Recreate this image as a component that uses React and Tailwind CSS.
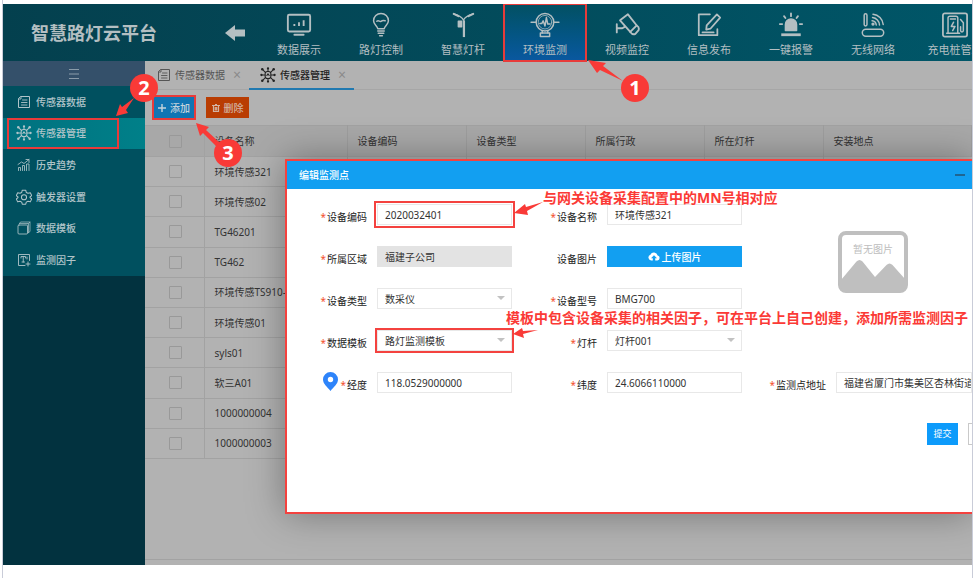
import React from "react";

const line = { fill: "none", stroke: "currentColor", strokeWidth: 1.6, strokeLinecap: "round", strokeLinejoin: "round" };

function Svg({ size, children }) {
  return (
    <svg className={size} viewBox="0 0 28 28" aria-hidden="true" {...line}>
      {children}
    </svg>
  );
}

const MonitorIcon = () => (
  <Svg size="h-[26px] w-[26px]">
    <rect x="2" y="3" width="24" height="18" rx="1.5" strokeWidth="2" />
    <path d="M9 15v-2M14 15v-4M19 15V9" strokeWidth="2" strokeLinecap="butt" />
    <path d="M9 24.5h10" strokeWidth="2" />
  </Svg>
);
const BulbIcon = () => (
  <Svg size="h-[26px] w-[26px]">
    <path d="M10.5 18C10 15 6 13.500 6 9.500a8 8 0 0 1 16 0c0 4-4 5.500-4.500 8.500z" />
    <path d="M9.500 10c2-2 3 1 4.500 0s2.500-1 4.500-.5M10.500 20.500h7M11 23h6M12.500 25.500h3" />
  </Svg>
);
const PoleIcon = () => (
  <Svg size="h-[26px] w-[26px]">
    <path d="M14.500 9C13.500 6 11 4 4 2M14.500 9C15.500 6 18 4 25 2" strokeWidth="1.400" />
    <path d="M4 2l5 2.500M25 2l-5 2.500" strokeWidth="2.200" />
    <rect x="9" y="10" width="3.500" height="6" fill="currentColor" />
    <path d="M15 9v18" strokeWidth="2.400" strokeLinecap="butt" />
  </Svg>
);
const SensorIcon = () => (
  <Svg size="h-[26px] w-[26px] overflow-visible">
    <circle cx="14" cy="11" r="9.500" />
    <circle cx="14" cy="11" r="7.300" strokeWidth=".8" />
    <path d="M-1 11h5M24 11h5M8.500 12.500h2l1.500-3 2 5.500 1.500-9 1.500 7h2.500" />
    <path d="M11 20v3M17 20v3M9 22.500h10v4H9z" />
  </Svg>
);
const CameraIcon = () => (
  <Svg size="h-[26px] w-[26px]">
    <path d="M6.500 9L15 2.500l9.500 12-7 7z" strokeWidth="2" />
    <path d="M24.500 14.500q3 1.500 2 5l-3.500 4q-3 1.500-5.500-2M3 13v9M3 17.500h6l2.500-1.500" strokeWidth="2" />
  </Svg>
);
const EditIcon = () => (
  <Svg size="h-[26px] w-[26px]">
    <path d="M15 2.500H3v22.500h20v-6.500" strokeWidth="1.900" />
    <path d="M22.500 2.500l3.500 3.500-10.500 12-4.500 1 .5-4.500zM7 22h12" strokeWidth="1.900" />
  </Svg>
);
const AlarmIcon = () => (
  <Svg size="h-[26px] w-[26px]">
    <path d="M8 20v-6.500a6 6 0 0 1 12 0V20z" fill="currentColor" />
    <path d="M3.500 24.500h21" strokeWidth="3" strokeLinecap="butt" />
    <path d="M14 1.500v3M6.500 4.500L8 6.500M21.500 4.500L20 6.500M2 13h2.500M23.500 13H26" strokeWidth="2" />
  </Svg>
);
const RouterIcon = () => (
  <Svg size="h-[26px] w-[26px]">
    <rect x="2.500" y="18.500" width="23" height="7.500" rx="3.700" />
    <rect x="4.500" y="2" width="3" height="13" rx="1.500" />
    <circle cx="14" cy="13" r="1" fill="currentColor" />
    <path d="M13 9.500a5 5 0 0 1 4.500 4.500M13.500 6a8.500 8.500 0 0 1 7.500 8M14 2.500A12 12 0 0 1 25 13.500" />
  </Svg>
);
const ChargerIcon = () => (
  <Svg size="h-[26px] w-[26px]">
    <rect x="1" y="1.500" width="26" height="25" rx="2" strokeWidth="1.900" />
    <path d="M6.500 23V6.500c0-1.500 1-2 2-2H15c1.500 0 2 .5 2 2V23zM5 23h14M9 7.500h5.500" />
    <path d="M12.500 11l-2.500 4.500h4L11.500 20M20 8l3 3.500V20c0 2-3 2-3 0v-4" />
  </Svg>
);

const DocIcon = ({ size }) => (
  <Svg size={size}>
    <path d="M8 3h17v22H3V8z" strokeWidth="2" />
    <path d="M8 3v5H3M11 10h9M9 15h11M9 20h11" strokeWidth="1.800" />
  </Svg>
);
const NodeIcon = ({ size }) => (
  <Svg size={size}>
    <rect x="9" y="8" width="10" height="12" rx="4" strokeWidth="1.800" />
    <path d="M9 9L5 5M19 9l4-4M9 19l-4 4M19 19l4 4M9 14H4M19 14h5M14 8V4M14 20v4M12 15l2-3 2 3" strokeWidth="1.800" />
    <g fill="currentColor" stroke="none">
      <circle cx="4" cy="4" r="2.200" />
      <circle cx="24" cy="4" r="2.200" />
      <circle cx="4" cy="24" r="2.200" />
      <circle cx="24" cy="24" r="2.200" />
      <circle cx="2.500" cy="14" r="2" />
      <circle cx="25.500" cy="14" r="2" />
      <circle cx="14" cy="2.500" r="2" />
      <circle cx="14" cy="25.500" r="2" />
    </g>
  </Svg>
);
const TrendIcon = ({ size }) => (
  <Svg size={size}>
    <path d="M3 25v-6h4v6M11 25V15h4v10M19 25V12h5v13M2 13l7-5 5 3 10-8M18 3h6v6" strokeWidth="1.700" />
  </Svg>
);
const GearIcon = ({ size }) => (
  <Svg size={size}>
    <path d="M11 2h6l1 4 3 1.500 4-1 2.500 5-3 2.500v1l3 2.500-2.500 5-4-1L18 23l-1 3.500h-6L10 23l-3-1.500-4 1-2.500-5 3-2.500v-1l-3-2.500 2.500-5 4 1L10 6z" strokeWidth="1.800" />
    <circle cx="14" cy="14.500" r="4.500" strokeWidth="1.800" />
  </Svg>
);
const StackIcon = ({ size }) => (
  <Svg size={size}>
    <rect x="2" y="8" width="19" height="18" rx="2" strokeWidth="1.700" />
    <path d="M5 5l2-3h19v19l-4 3M5 5h17l1 1v17M26 2l-4 4" strokeWidth="1.400" />
  </Svg>
);
const FactorIcon = ({ size }) => (
  <Svg size={size}>
    <path d="M25 15V3H3v22h13" strokeWidth="1.800" />
    <path d="M8 10V7h9v3M12.500 7v11M10 18h5M22 18v8M18 22h8M20 8v4" strokeWidth="1.800" />
  </Svg>
);

const NAV = [
  ["数据展示", MonitorIcon],
  ["路灯控制", BulbIcon],
  ["智慧灯杆", PoleIcon],
  ["环境监测", SensorIcon],
  ["视频监控", CameraIcon],
  ["信息发布", EditIcon],
  ["一键报警", AlarmIcon],
  ["无线网络", RouterIcon],
  ["充电桩管理", ChargerIcon],
];

const MENU = [
  ["传感器数据", DocIcon],
  ["传感器管理", NodeIcon],
  ["历史趋势", TrendIcon],
  ["触发器设置", GearIcon],
  ["数据模板", StackIcon],
  ["监测因子", FactorIcon],
];

const COLUMNS = ["设备名称", "设备编码", "设备类型", "所属行政", "所在灯杆", "安装地点"];
const ROWS = ["环境传感321", "环境传感02", "TG46201", "TG462", "环境传感TS910-", "环境传感01", "syls01", "软三A01", "1000000004", "1000000003"];

function Header() {
  return (
    <header className="flex h-[57px] shrink-0 bg-linear-to-r from-[#04404e] to-[#005668] text-[#b4bfc2]">
      <h1 className="flex w-[205px] shrink-0 items-center pl-7 text-lg font-bold">智慧路灯云平台</h1>
      <button type="button" aria-label="返回" className="flex w-[50px] shrink-0 items-center pl-4">
        <svg className="h-5 w-[22px]" viewBox="0 0 22 20" fill="currentColor" aria-hidden="true">
          <path d="M1 10l10-8v4.500h10v7H11V18z" />
        </svg>
      </button>
      <nav className="flex">
        {NAV.map(([label, Icon], i) => (
          <a
            key={label}
            href="#"
            className={
              "flex w-[82px] shrink-0 flex-col items-center gap-1 pt-2 text-[11px] leading-4 " +
              (i === 3 ? "bg-linear-to-b from-[#035062] to-[#0a58a0] outline-2 -outline-offset-1 outline-[#e83b3a]" : "")
            }
          >
            <Icon />
            <span className="whitespace-nowrap">{label}</span>
          </a>
        ))}
      </nav>
    </header>
  );
}

function Sidebar() {
  return (
    <aside className="w-[142px] shrink-0 bg-[#02323f]">
      <button type="button" aria-label="折叠菜单" className="flex h-[25px] w-full items-center justify-center bg-[#34506a] text-[#8a9ba9]">
        <svg className="h-3 w-3" viewBox="0 0 12 12" stroke="currentColor" strokeWidth="1.200" aria-hidden="true">
          <path d="M1 1.500h10M1 6h10M1 10.500h10" />
        </svg>
      </button>
      <nav className="grid h-[190px] grid-rows-6 bg-[#00505f] text-[#b0c4c9]">
        {MENU.map(([label, Icon], i) => (
          <a
            key={label}
            href="#"
            className={"relative flex items-center gap-1 pl-[13px] " + (i === 1 ? "bg-linear-to-r from-[#00717f] to-[#008089]" : "")}
          >
            <span className="flex w-4 justify-center">
              <Icon size={i === 1 || i === 3 ? "h-4 w-4" : "h-[14px] w-[14px]"} />
            </span>
            <span className="font-medium">{label}</span>
            {i === 1 && <span className="absolute inset-y-0 left-1 w-[112px] border-2 border-[#e83b3a]" />}
          </a>
        ))}
      </nav>
    </aside>
  );
}

function Tabs() {
  return (
    <div className="flex h-[29px] shrink-0 border-b border-[#a6a6a6]">
      <a href="#" className="flex items-center gap-1 pl-3 text-[#555]">
        <DocIcon size="h-[14px] w-[14px]" />
        <span>传感器数据</span>
        <span className="w-4 text-center text-sm leading-4 text-[#8a8a8a]">×</span>
      </a>
      <a href="#" className="ml-1 flex h-[29px] items-center gap-1 border-b-2 border-[#2079b0] pr-1 pl-[11px] text-[#222]">
        <NodeIcon size="h-4 w-4" />
        <span className="font-medium">传感器管理</span>
        <span className="w-4 text-center text-sm leading-4 text-[#8a8a8a]">×</span>
      </a>
    </div>
  );
}

function Toolbar() {
  return (
    <div className="flex h-[35px] shrink-0 items-center gap-3 pl-[9px] text-[#c4d3dc]">
      <button type="button" className="flex h-[21px] w-10 items-center justify-center gap-1 bg-[#1175b3] font-medium outline-2 outline-[#e83b3a]">
        <svg className="h-2 w-2" viewBox="0 0 8 8" stroke="currentColor" strokeWidth="1.400" aria-hidden="true">
          <path d="M4 0v8M0 4h8" />
        </svg>
        添加
      </button>
      <button type="button" className="flex h-[21px] w-[43px] items-center justify-center gap-1 bg-[#b93d03] font-medium text-[#d3b4a4]">
        <svg className="h-2 w-2" viewBox="0 0 8 8" fill="none" stroke="currentColor" strokeWidth="1.200" aria-hidden="true">
          <path d="M0 1.500h8M3 .5h2M1.500 2v5.500h5V2M3.300 3v3.500M4.700 3v3.500" />
        </svg>
        删除
      </button>
    </div>
  );
}

const Check = ({ label }) => (
  <input
    type="checkbox"
    aria-label={label}
    className="block h-[13px] w-[13px] appearance-none rounded-[1px] border border-[#999]"
  />
);

function DeviceTable() {
  return (
    <table className="h-[334px] w-full shrink-0 table-fixed border-collapse text-[#333]">
      <colgroup>
        <col className="w-[59px]" />
        <col className="w-[143px]" />
        <col className="w-[119px]" />
        <col className="w-[119px]" />
        <col className="w-[119px]" />
        <col className="w-[119px]" />
        <col />
      </colgroup>
      <thead>
        <tr className="h-[31px] border-y border-[#a2a2a2] bg-[#a8a8a8]">
          <th className="border-r border-[#a2a2a2] pl-6">
            <Check label="全选" />
          </th>
          {COLUMNS.map((c) => (
            <th key={c} className="border-r border-[#9e9e9e] pl-[10px] text-left font-normal">
              {c}
            </th>
          ))}
        </tr>
      </thead>
      <tbody>
        {ROWS.map((name) => (
          <tr key={name} className="h-[30px] border-b border-[#a2a2a2]">
            <td className="border-r border-[#a2a2a2] pl-6">
              <Check label={name} />
            </td>
            <td className="border-r border-[#a2a2a2] pl-[10px] whitespace-nowrap">{name}</td>
            <td className="border-r border-[#a2a2a2]" />
            <td className="border-r border-[#a2a2a2]" />
            <td className="border-r border-[#a2a2a2]" />
            <td className="border-r border-[#a2a2a2]" />
            <td />
          </tr>
        ))}
      </tbody>
    </table>
  );
}

function Label({ htmlFor, required = true, first, pin, children }) {
  return (
    <label
      htmlFor={htmlFor}
      className={"flex items-center justify-end pt-[5px] whitespace-nowrap text-[#222] " + (first ? "col-start-1" : "")}
    >
      {pin && (
        <svg className="mr-[2px] -mt-2 h-[19px] w-[15px]" viewBox="0 0 15 19" aria-hidden="true">
          <path fill="#2e84fa" fillRule="evenodd" d="M7.500 0A7.500 7.500 0 0 0 0 7.500C0 12 4.500 15 7.500 19 10.500 15 15 12 15 7.500A7.500 7.500 0 0 0 7.500 0zM7.500 4.800a2.700 2.700 0 1 0 0 5.400 2.700 2.700 0 0 0 0-5.400z" />
        </svg>
      )}
      {required && <span className="mr-[1px] text-[#f4512c]">*</span>}
      {children}
    </label>
  );
}

function TextField({ id, value, marked }) {
  return (
    <input
      id={id}
      type="text"
      defaultValue={value}
      className={
        "h-[21px] w-full min-w-0 border border-[#e8e8e8] bg-white pl-[7px] text-[#333] " +
        (marked ? "outline-2 outline-offset-1 outline-[#f4423f]" : "")
      }
    />
  );
}

function SelectField({ id, value, marked }) {
  return (
    <div className={"relative h-[21px] " + (marked ? "outline-2 outline-[#f4423f]" : "")}>
      <select id={id} className="h-full w-full appearance-none border border-[#e8e8e8] bg-white px-[7px] text-[#333]">
        <option>{value}</option>
      </select>
      <span className="pointer-events-none absolute top-2 right-[7px] border-x-4 border-t-4 border-x-transparent border-t-[#c2c2c2]" />
    </div>
  );
}

function Placeholder() {
  return (
    <div className="relative col-start-6 row-span-3 row-start-1 mt-[11px] ml-[2px] h-[62px] w-[70px] self-center">
      <svg className="h-full w-full" viewBox="0 0 70 62" aria-hidden="true">
        <rect x="2" y="2" width="66" height="58" rx="6" fill="#fff" stroke="#bfbfbf" strokeWidth="4" />
        <path fill="#bfbfbf" d="M3 49L18.500 30.500q3-3 6 0L37 46 48.500 34q3-3 6 0L67 48v8q0 4-4 4H7q-4 0-4-4z" />
      </svg>
      <span className="absolute inset-x-0 top-[10px] text-center text-[#bdbdbd]">暂无图片</span>
    </div>
  );
}

function Dialog() {
  return (
    <section
      role="dialog"
      aria-label="编辑监测点"
      className="absolute top-[155px] right-0 left-[282px] overflow-hidden border-2 border-r-0 border-[#f4423f] bg-white shadow-[0_0_35px_rgba(0,0,0,0.35)]"
    >
      <div className="flex h-7 items-center justify-between bg-[#129ff1] pr-[7px] pl-3 text-white">
        <h2 className="font-medium">编辑监测点</h2>
        <button type="button" aria-label="最小化" className="flex h-4 w-[10px] items-center">
          <span className="h-[2px] w-full bg-[#1f6692]" />
        </button>
      </div>
      <form className="pt-[15px] pb-[67px]">
        <div className="grid grid-cols-[80px_135px_75px_135px_74px_minmax(0,1fr)] gap-x-[10px] gap-y-[21px]">
          <Label htmlFor="code" first>设备编码</Label>
          <TextField id="code" value="2020032401" marked />
          <Label htmlFor="name">设备名称</Label>
          <TextField id="name" value="环境传感321" />
          <Placeholder />

          <Label htmlFor="area" first>所属区域</Label>
          <input id="area" type="text" readOnly value="福建子公司" className="h-[21px] w-full bg-[#e3e3e3] px-2 text-[#333]" />
          <Label htmlFor="upload" required={false}>设备图片</Label>
          <button id="upload" type="button" className="flex h-[21px] items-center justify-center gap-[2px] bg-[#129ff1] font-medium text-white">
            <svg className="h-[10px] w-3" viewBox="0 0 12 10" aria-hidden="true">
              <path fill="#fff" d="M3 8.500a3 3 0 0 1-.6-5.800A3.800 3.800 0 0 1 9.600 3.400 2.600 2.600 0 0 1 9.400 8.500H7.200V6.200H9L6 3.200 3 6.200h1.800v2.300z" />
            </svg>
            上传图片
          </button>

          <Label htmlFor="type" first>设备类型</Label>
          <SelectField id="type" value="数采仪" />
          <Label htmlFor="model">设备型号</Label>
          <TextField id="model" value="BMG700" />

          <Label htmlFor="template" first>数据模板</Label>
          <SelectField id="template" value="路灯监测模板" marked />
          <Label htmlFor="pole">灯杆</Label>
          <SelectField id="pole" value="灯杆001" />

          <Label htmlFor="lng" first pin>经度</Label>
          <TextField id="lng" value="118.0529000000" />
          <Label htmlFor="lat">纬度</Label>
          <TextField id="lat" value="24.6066110000" />
          <Label htmlFor="address">监测点地址</Label>
          <TextField id="address" value="福建省厦门市集美区杏林街道" />
        </div>
        <div className="mt-[30px] flex justify-end gap-[10px]">
          <button type="submit" className="h-[22px] w-[31px] shrink-0 bg-[#0d9bfb] text-[9px] text-white">提交</button>
          <button type="reset" aria-label="重置" className="-mr-[27px] h-[22px] w-[31px] shrink-0 border border-[#c9c9c9] bg-white" />
        </div>
      </form>
    </section>
  );
}

const badge = "absolute flex h-7 w-7 items-center justify-center rounded-full bg-[#f93a37] text-xl font-bold text-white";
const note = "absolute text-sm leading-5 font-bold whitespace-nowrap text-[#fb3a36]";

function Annotations() {
  return (
    <div className="pointer-events-none absolute inset-0 overflow-hidden">
      <svg className="absolute inset-0 h-full w-full" fill="#f93a37" aria-hidden="true">
        <g transform="translate(-3 -4)">
          <path d="M588 60L606 63 603 66 623 81 600 70 597 73z" />
          <path d="M116 116L120 104 122 107 134 98 126 110 128 113z" />
          <path d="M196 123L209 127 206 130 220 143 216 146 203 133 200 136z" />
          <path d="M514 213L525 204 526 207 543 202 527 211 528 215z" />
          <path d="M513 334L522 328 523 331 538 330 523 334 524 338z" />
        </g>
      </svg>
      <span className={badge + " top-[70px] left-[618px]"}>1</span>
      <span className={badge + " top-[70px] left-[127px]"}>2</span>
      <span className={badge + " top-[135px] left-[211px]"}>3</span>
      <p className={note + " top-[184px] left-[540px]"}>与网关设备采集配置中的MN号相对应</p>
      <p className={note + " top-[304px] left-[503px]"}>模板中包含设备采集的相关因子，可在平台上自己创建，添加所需监测因子</p>
    </div>
  );
}

export default function App() {
  return (
    <div className="min-h-screen overflow-hidden bg-white font-['Noto_Sans','Noto_Sans_CJK_SC',sans-serif] text-[10px] leading-4">
      <div className="ml-[2px] min-h-screen border-x border-[#c9ccd8] pt-1">
        <div className="relative flex h-[calc(100vh-17px)] flex-col overflow-hidden bg-[#b2b2b2]">
          <Header />
          <div className="flex min-h-0 flex-1">
            <Sidebar />
            <main className="flex min-w-0 flex-1 flex-col overflow-hidden">
              <Tabs />
              <Toolbar />
              <DeviceTable />
              <footer className="mt-auto h-[6px] shrink-0 border-t border-[#a2a2a2]" />
            </main>
          </div>
          <Dialog />
          <Annotations />
        </div>
      </div>
    </div>
  );
}
